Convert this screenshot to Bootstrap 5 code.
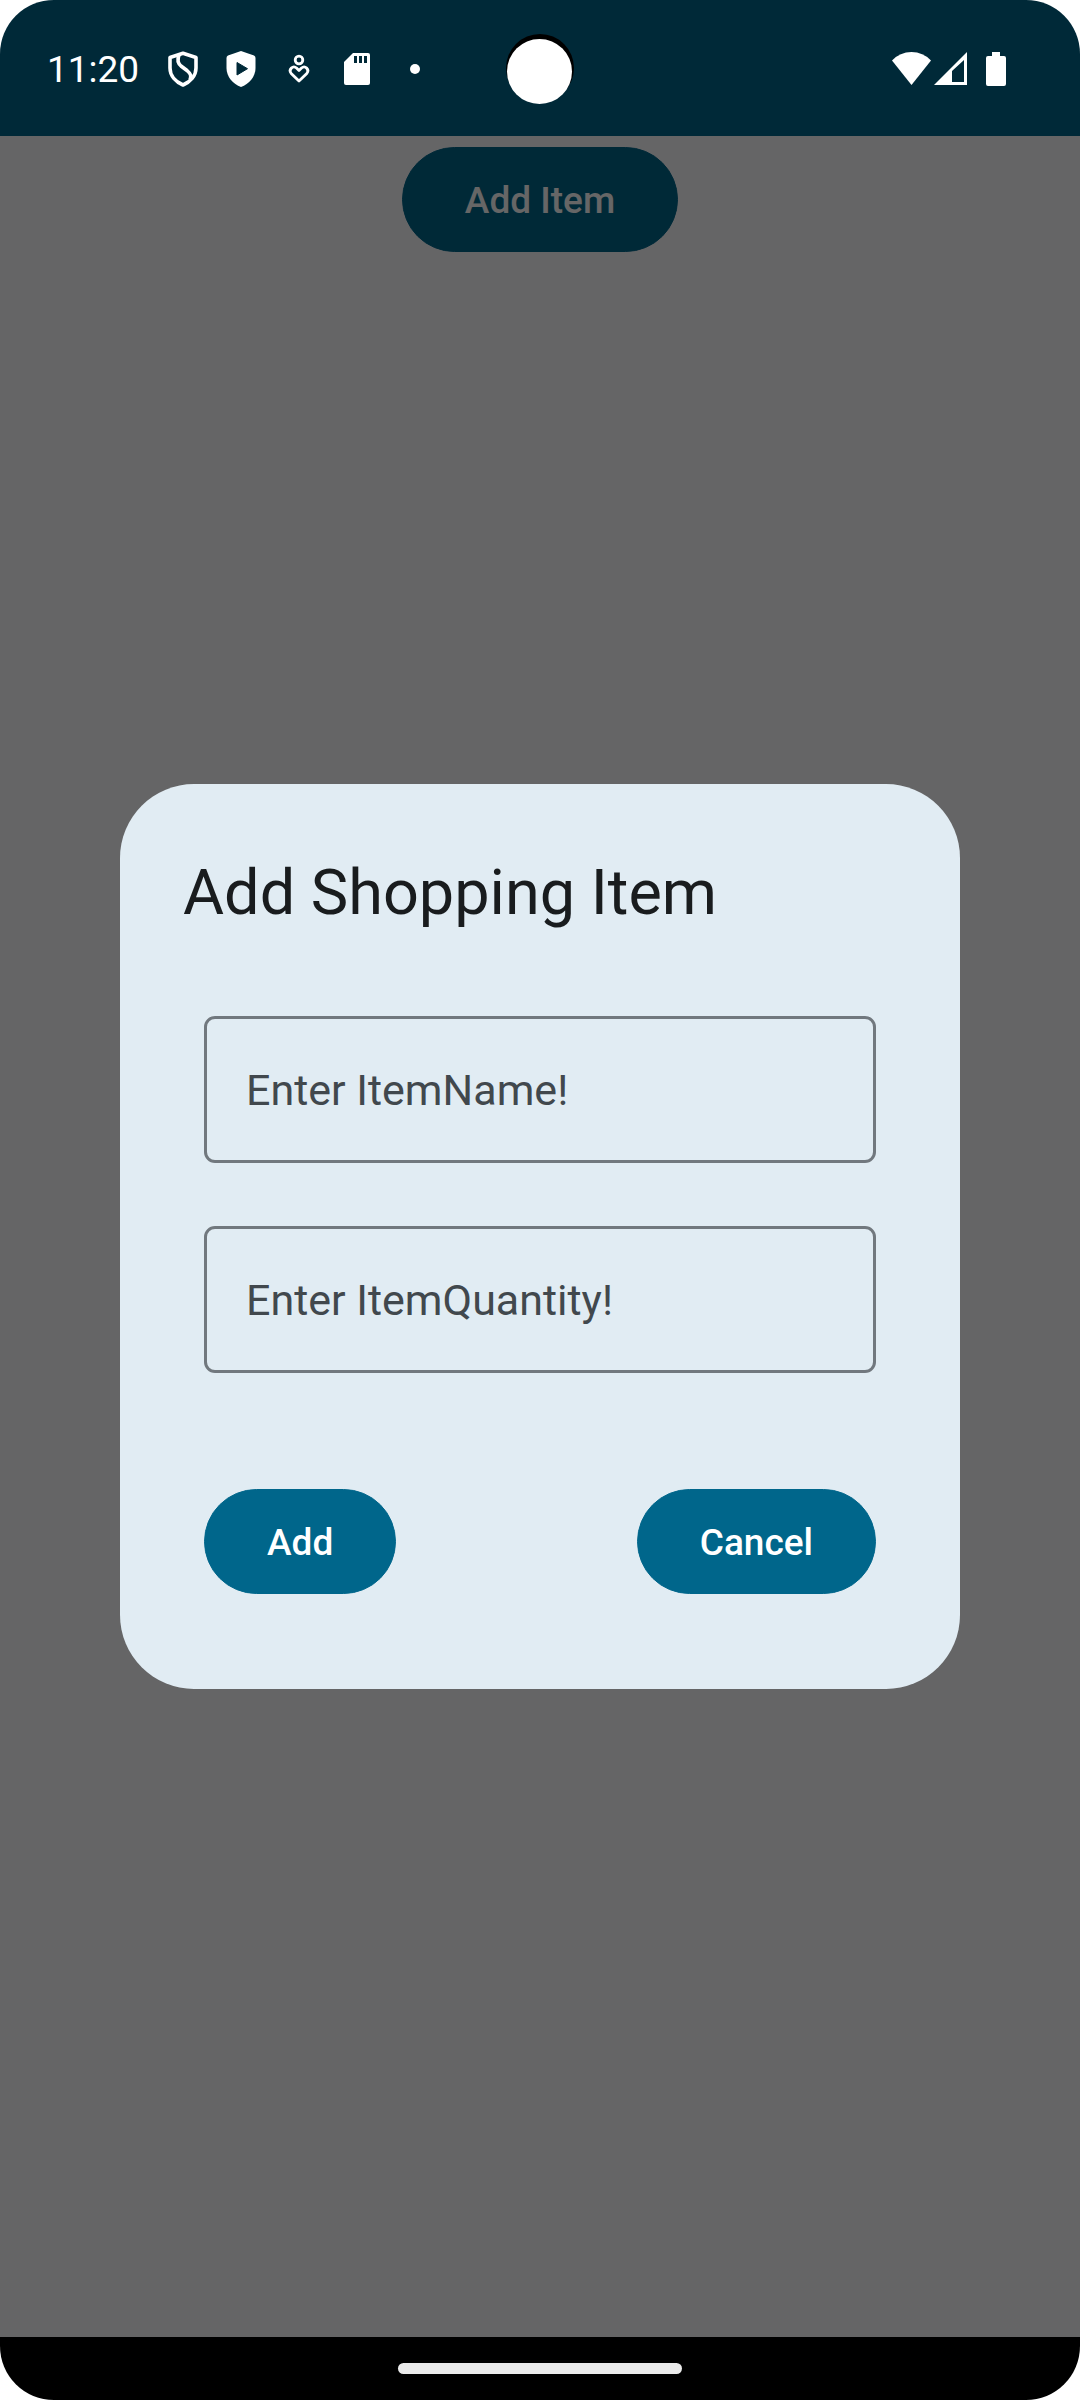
<!DOCTYPE html>
<html lang="en">
<head>
<meta charset="utf-8">
<meta name="viewport" content="width=device-width, initial-scale=1">
<title>Shopping List</title>
<link href="https://cdn.jsdelivr.net/npm/bootstrap@5.3.0/dist/css/bootstrap.min.css" rel="stylesheet">
<style>
  body { font-family: Roboto, "Liberation Sans", sans-serif; background: #fff; }
  .phone { border-radius: 54px; background: #fcfcff; }
  .status-bar { height: 136px; padding: 2px 74px 0 47px; background: #002938; color: #fff; }
  .clock { font-size: 37px; line-height: 44px; padding-top: 2px; }
  .notices { gap: 22px; margin-left: 26px; }
  .camera { width: 68px; height: 70px; top: 34px; left: 50%; margin-left: -34px; }
  .app-area { padding-top: 11px; }
  .scrim { background: rgba(0, 0, 0, .6); }
  .pill { --bs-btn-color: #fff; --bs-btn-bg: #00668b; --bs-btn-border-color: #00668b;
          --bs-btn-hover-color: #fff; --bs-btn-hover-bg: #005574; --bs-btn-hover-border-color: #005574;
          --bs-btn-font-size: 37px; --bs-btn-font-weight: 500; --bs-btn-line-height: 43px;
          padding: 31px 62px 29px; }
  .sheet { width: 100%; max-width: 840px; padding: 72px 63px 95px; border-radius: 74px; background: #e1ecf3; }
  .sheet-title { font-size: 63px; line-height: 74px; font-weight: 400; color: #191c1e; margin-bottom: 86px; }
  .sheet-fields { gap: 63px; margin: 0 21px 116px; }
  .sheet-fields .field { height: 147px; font-size: 43px; line-height: 63px; padding: 39px; border: 3px solid #71787e; border-radius: 11px; color: #191c1e; }
  .sheet-fields .field, .sheet-fields .field:focus { background: transparent; }
  .sheet-fields label { font-size: 43px; line-height: 63px; padding: 43px 42px 41px; border: 0; color: #41484d; }
  .sheet-actions { margin: 0 21px; }
  .nav-bar { height: 63px; background: #000; }
  .home-handle { width: 284px; height: 11px; background: #ebebeb; }
</style>
</head>
<body>
<div class="phone d-flex flex-column min-vh-100 overflow-hidden">
  <header class="status-bar d-flex align-items-center position-relative">
    <span class="clock">11:20</span>
    <div class="notices d-flex align-items-center">
      <svg width="36" height="36" viewBox="0 0 36 36" fill="none" stroke="#fff" stroke-width="3.600" stroke-linejoin="round"><path d="M18 2.200L31 6.500V17C31 25 25 31 18 34C11 31 5 25 5 17V6.500Z"/><path d="M14 4C12 9 12.500 12 16 15L22 19.500C26 23 26.500 25 25 29"/></svg>
      <svg width="36" height="36" viewBox="0 0 36 36"><path fill="#fff" d="M18 0L31 4.500Q32.500 5.200 32.500 7V17C32.500 26 26 33 18 36C10 33 3.500 26 3.500 17V7Q3.500 5.200 5 4.500Z"/><path fill="#002938" d="M14 11.500V24L24.500 17.700Z" stroke="#002938" stroke-linejoin="round"/></svg>
      <svg width="36" height="36" viewBox="0 0 36 36" fill="none" stroke="#fff" stroke-width="2.800" stroke-linejoin="round"><circle cx="18" cy="9" r="3.800"/><path d="M18 30L10.200 22.500C7 18.500 12 14 15.500 17L18 19.500L20.500 17C24 14 29 18.500 25.800 22.500Z"/></svg>
      <svg width="36" height="36" viewBox="0 0 36 36"><path fill="#fff" d="M14 2H29Q31 2 31 4V32Q31 34 29 34H7Q5 34 5 32V11Z"/><path fill="#002938" d="M15 5H18V12H15ZM20 5H23V12H20ZM25 5H28V12H25Z"/></svg>
      <svg width="36" height="36" viewBox="0 0 36 36"><circle cx="18" cy="18" r="5" fill="#fff"/></svg>
    </div>
    <div class="d-flex align-items-center ms-auto">
      <svg width="114" height="36" viewBox="0 0 114 36" fill="#fff"><path d="M0 9.500Q8 1 19.500 1T39 9.500L19.500 34Z"/><path fill-rule="evenodd" d="M42 34L75 1V34ZM60 20V31H72V9Z"/><path d="M100 1H108V5H112Q114 5 114 7V33Q114 35 112 35H96Q94 35 94 33V7Q94 5 96 5H100Z"/></svg>
    </div>
    <svg class="camera position-absolute" viewBox="0 0 68 70"><circle cx="34" cy="34" r="34"/><circle cx="33.500" cy="37.500" r="32.500" fill="#fff"/></svg>
  </header>

  <main class="app-area position-relative flex-grow-1 text-center">
    <button type="button" class="btn pill rounded-pill">Add Item</button>
    <div class="scrim position-absolute top-0 start-0 w-100 h-100 d-flex align-items-center justify-content-center text-start">
      <form class="sheet" role="dialog" aria-labelledby="sheet-title">
        <h1 class="sheet-title" id="sheet-title">Add Shopping Item</h1>
        <div class="sheet-fields d-flex flex-column">
          <div class="form-floating">
            <input class="form-control field" id="item-name" type="text" placeholder="">
            <label for="item-name">Enter ItemName!</label>
          </div>
          <div class="form-floating">
            <input class="form-control field" id="item-quantity" type="text" placeholder="">
            <label for="item-quantity">Enter ItemQuantity!</label>
          </div>
        </div>
        <div class="sheet-actions d-flex justify-content-between">
          <button type="button" class="btn pill rounded-pill">Add</button>
          <button type="button" class="btn pill rounded-pill">Cancel</button>
        </div>
      </form>
    </div>
  </main>

  <footer class="nav-bar d-flex align-items-center justify-content-center">
    <div class="home-handle rounded-pill"></div>
  </footer>
</div>
<script src="https://cdn.jsdelivr.net/npm/bootstrap@5.3.0/dist/js/bootstrap.bundle.min.js"></script>
</body>
</html>
